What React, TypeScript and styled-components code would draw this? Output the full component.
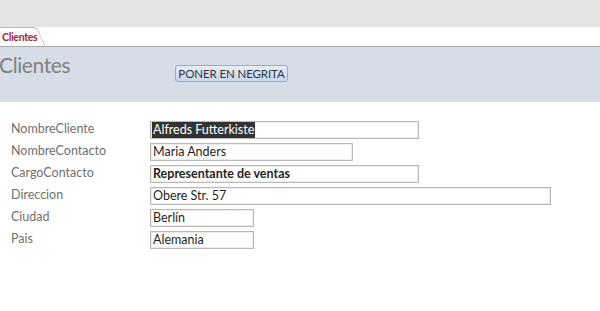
import React from "react";
import styled, { createGlobalStyle } from "styled-components";

const GlobalStyle = createGlobalStyle`
  html, body { margin: 0; padding: 0; background: #ffffff; }
  body { font-family: Lato, "Open Sans", "Liberation Sans", sans-serif; width: 600px; height: 311px; overflow: hidden; }
`;

const TopBar = styled.div`
  height: 27px;
  background: #e4e4e4;
`;

const TabStrip = styled.div`
  height: 19px;
  background: #ffffff;
  border-bottom: 1px solid #a9a9a9;
  display: flex;
  align-items: stretch;
`;

const Tab = styled.div`
  position: relative;
  padding: 0 12px 0 2px;
  display: flex;
  align-items: center;
  font-size: 10.5px;
  font-weight: 700;
  color: #a3272f;
  letter-spacing: -0.3px;
  &::after {
    content: "";
    position: absolute;
    left: -10px;
    top: 0;
    right: 3px;
    bottom: -1px;
    border-top: 1px solid #b5b5b5;
    border-right: 1px solid #b5b5b5;
    border-top-right-radius: 5px;
    transform: skewX(24deg);
    transform-origin: bottom left;
    pointer-events: none;
  }
`;

const Header = styled.div`
  height: 55px;
  background: #d6dde7;
  display: grid;
  grid-template-columns: 175px auto;
  align-items: start;
`;

const Title = styled.h1`
  margin: 5px 0 0 -1px;
  font-size: 21px;
  font-weight: 400;
  color: #828282;
  line-height: 26px;
  letter-spacing: -0.4px;
`;

const Button = styled.button`
  margin-top: 18px;
  width: 113px;
  height: 17px;
  padding: 0;
  border: 1px solid #93acd6;
  border-radius: 3px;
  background: linear-gradient(#eaf0fa, #d3dff3 55%, #c8d7f0);
  color: #333333;
  font-family: Lato, "Open Sans", "Liberation Sans", sans-serif;
  font-size: 11.5px;
  line-height: 15px;
  letter-spacing: -0.1px;
`;

const Form = styled.div`
  padding: 19px 0 0 11px;
  display: grid;
  grid-template-columns: 139px 1fr;
  row-gap: 4px;
  align-items: center;
`;

const Label = styled.div`
  font-size: 12.5px;
  color: #707070;
  height: 18px;
  line-height: 16px;
`;

const Field = styled.div<{ $w: number; $bold?: boolean }>`
  box-sizing: border-box;
  width: ${(p) => p.$w}px;
  height: 18px;
  border: 1px solid #b9b9b9;
  box-shadow: inset 0 0 0 1px #ececec;
  padding: 0 2px;
  font-size: 12.5px;
  line-height: 16px;
  color: #1f1f1f;
  font-weight: ${(p) => (p.$bold ? 700 : 400)};
  white-space: nowrap;
  overflow: hidden;
`;

const Selected = styled.span`
  background: #333333;
  color: #ffffff;
  display: inline-block;
  line-height: 16px;
  margin-left: -1px;
  padding: 0 1px;
`;

const rows: { label: string; value: string; w: number; bold?: boolean; sel?: boolean }[] = [
  { label: "NombreCliente", value: "Alfreds Futterkiste", w: 269, sel: true },
  { label: "NombreContacto", value: "Maria Anders", w: 203 },
  { label: "CargoContacto", value: "Representante de ventas", w: 269, bold: true },
  { label: "Direccion", value: "Obere Str. 57", w: 401 },
  { label: "Ciudad", value: "Berlín", w: 104 },
  { label: "Pais", value: "Alemania", w: 104 },
];

export default function App() {
  return (
    <>
      <GlobalStyle />
      <TopBar />
      <TabStrip>
        <Tab>Clientes</Tab>
      </TabStrip>
      <Header>
        <Title>Clientes</Title>
        <div>
          <Button>PONER EN NEGRITA</Button>
        </div>
      </Header>
      <Form>
        {rows.map((r) => (
          <React.Fragment key={r.label}>
            <Label>{r.label}</Label>
            <Field $w={r.w} $bold={r.bold}>
              {r.sel ? <Selected>{r.value}</Selected> : r.value}
            </Field>
          </React.Fragment>
        ))}
      </Form>
    </>
  );
}
